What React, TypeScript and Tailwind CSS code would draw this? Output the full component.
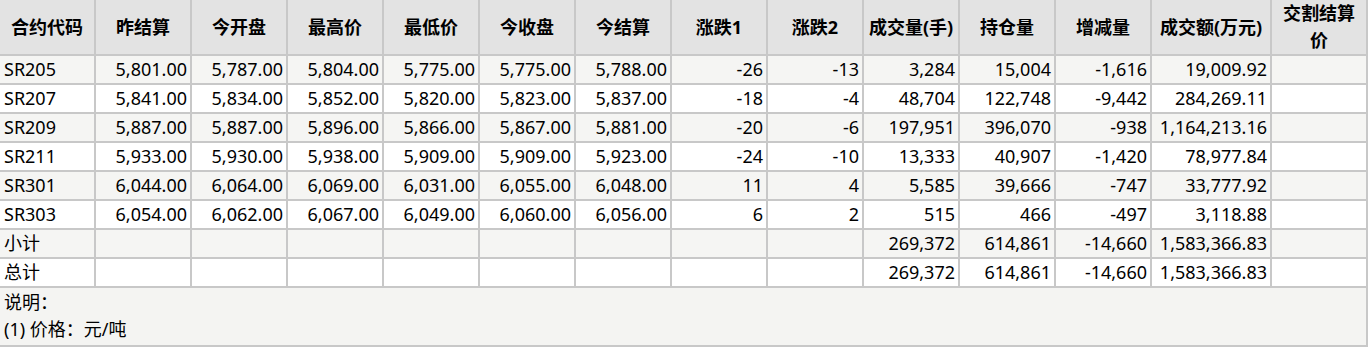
import React from 'react';

const headers: React.ReactNode[] = [
  '合约代码', '昨结算', '今开盘', '最高价', '最低价', '今收盘', '今结算',
  '涨跌1', '涨跌2', '成交量(手)', '持仓量', '增减量', '成交额(万元)',
  <>交割结算<br />价</>,
];

const rows: string[][] = [
  ['SR205', '5,801.00', '5,787.00', '5,804.00', '5,775.00', '5,775.00', '5,788.00', '-26', '-13', '3,284', '15,004', '-1,616', '19,009.92', ''],
  ['SR207', '5,841.00', '5,834.00', '5,852.00', '5,820.00', '5,823.00', '5,837.00', '-18', '-4', '48,704', '122,748', '-9,442', '284,269.11', ''],
  ['SR209', '5,887.00', '5,887.00', '5,896.00', '5,866.00', '5,867.00', '5,881.00', '-20', '-6', '197,951', '396,070', '-938', '1,164,213.16', ''],
  ['SR211', '5,933.00', '5,930.00', '5,938.00', '5,909.00', '5,909.00', '5,923.00', '-24', '-10', '13,333', '40,907', '-1,420', '78,977.84', ''],
  ['SR301', '6,044.00', '6,064.00', '6,069.00', '6,031.00', '6,055.00', '6,048.00', '11', '4', '5,585', '39,666', '-747', '33,777.92', ''],
  ['SR303', '6,054.00', '6,062.00', '6,067.00', '6,049.00', '6,060.00', '6,056.00', '6', '2', '515', '466', '-497', '3,118.88', ''],
  ['小计', '', '', '', '', '', '', '', '', '269,372', '614,861', '-14,660', '1,583,366.83', ''],
  ['总计', '', '', '', '', '', '', '', '', '269,372', '614,861', '-14,660', '1,583,366.83', ''],
];

const widths = [96, 96, 96, 96, 96, 96, 96, 96, 96, 96, 96, 96, 120, 96];

export default function App() {
  return (
    <div className="w-[1368px] h-[347px] overflow-hidden bg-white font-['Noto_Sans','Noto_Sans_CJK_SC',sans-serif] text-[18px] text-black">
      <table className="w-[1368px] table-fixed border-separate border-spacing-0">
        <colgroup>
          {widths.map((w, i) => (
            <col key={i} style={{ width: w }} />
          ))}
        </colgroup>
        <thead>
          <tr className="bg-[#e3e3e3]">
            {headers.map((h, i) => (
              <th
                key={i}
                className="h-[56px] px-0 border-r-2 border-b-2 border-[#c8c8c8] text-center align-middle font-bold leading-[27px] whitespace-nowrap"
              >
                {h}
              </th>
            ))}
          </tr>
        </thead>
        <tbody>
          {rows.map((row, r) => (
            <tr key={r} className={r % 2 === 0 ? 'bg-[#f5f5f3]' : 'bg-white'}>
              {row.map((cell, c) => (
                <td
                  key={c}
                  className={`h-[29px] px-[3px] border-r-2 border-b-2 border-[#c8c8c8] align-middle leading-[27px] whitespace-nowrap ${
                    c === 0 ? 'text-left pl-[4px]' : 'text-right'
                  }`}
                >
                  {cell}
                </td>
              ))}
            </tr>
          ))}
          <tr className="bg-[#f4f4f2]">
            <td
              colSpan={14}
              className="h-[59px] pl-[4px] pt-[1px] border-r-2 border-b-2 border-[#c8c8c8] align-top leading-[27px]"
            >
              <div>说明：</div>
              <div>(1) 价格：元/吨</div>
            </td>
          </tr>
        </tbody>
      </table>
    </div>
  );
}
